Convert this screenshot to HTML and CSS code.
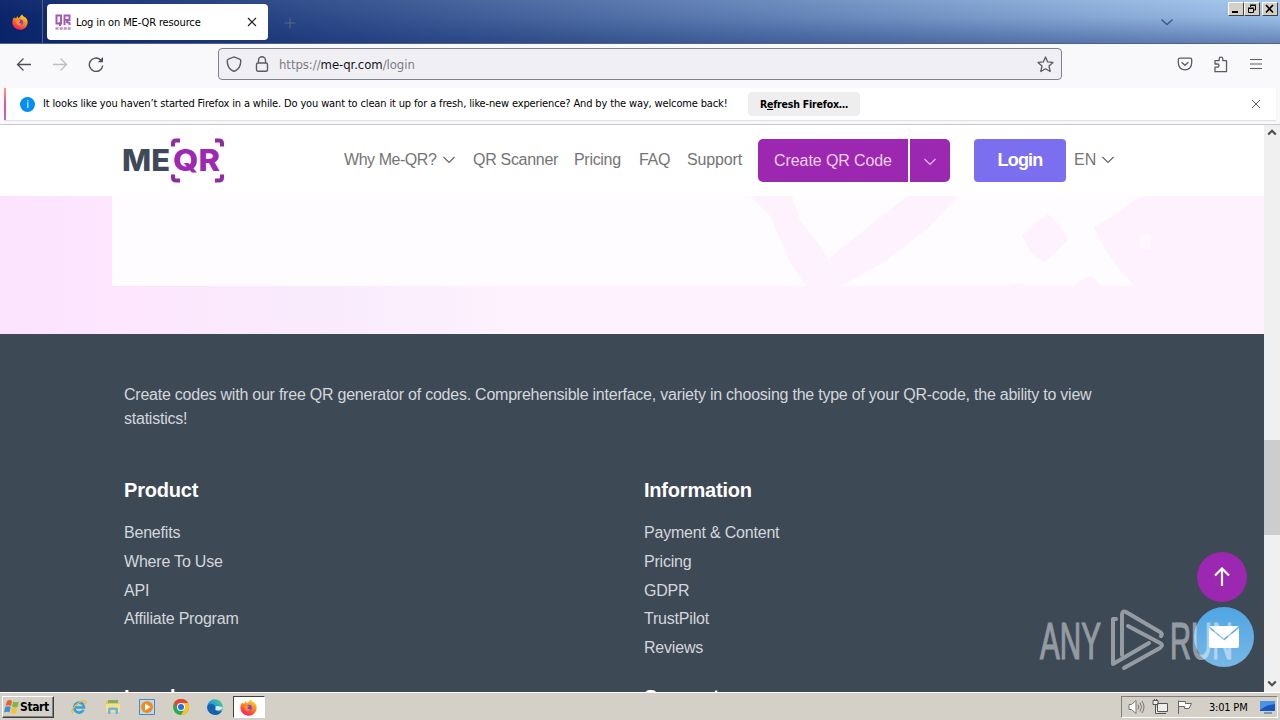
FILE: index.html
```html
<!DOCTYPE html>
<html lang="en">
<head>
    <meta charset="UTF-8">
    <meta name="viewport" content="width=device-width, initial-scale=1.0">
    <title>Log in on ME-QR resource</title>
    <link rel="stylesheet" href="styles.css">
</head>
<body>
    <svg width="0" height="0" class="defs">
        <defs>
            <linearGradient id="fox" x1="0.8" y1="0" x2="0.3" y2="1">
                <stop offset="0" stop-color="#ffe226"/>
                <stop offset="0.45" stop-color="#ff8a16"/>
                <stop offset="1" stop-color="#f5156c"/>
            </linearGradient>
            <linearGradient id="edge" x1="0" y1="1" x2="1" y2="0">
                <stop offset="0" stop-color="#0c59a4"/>
                <stop offset="0.5" stop-color="#1b9de2"/>
                <stop offset="1" stop-color="#5fd668"/>
            </linearGradient>
            <symbol id="firefox" viewBox="0 0 16 16">
                <path d="M5 2.200C6 3 6.300 3.600 6.600 4.200 8 3 8.700 1.800 10.200.3c.3 1.300 1.200 2 2.400 3.100l.2-.6C15 4.700 15.900 6.500 15.600 9c-.4 4-3.700 6.800-7.500 6.800S.6 12.800.4 8.800C.3 6.500 1 4.600 2.300 3.100l.5 1.300C3.500 4 4.300 3.900 4.700 4c-.1-.7 0-1.200.3-1.800z" fill="url(#fox)"/>
                <circle cx="8.300" cy="8.300" r="2.800" fill="#7542e5"/>
                <path d="M4.500 6.200c1.300-.7 2.700-.2 4.100.5L7 8.200c0 1.300 1.500 1.800 2.700 1-.4 1.700-1.800 2.300-3.200 1.900-1.700-.5-2.600-2.600-2-4.900z" fill="#ff9420"/>
            </symbol>
        </defs>
    </svg>

    <div class="desktop">
        <!-- Title bar -->
        <div class="titlebar">
            <div class="app-icon"><svg width="16" height="16"><use href="#firefox"/></svg></div>
            <div class="tab">
                <svg class="favicon" width="16" height="17" viewBox="0 0 16 17" fill="none" stroke="#a657b8">
                    <path d="M1.500 1.500h4.500v8H1.500zM5 8v4M9.500 11V1.500h5v4.500h-5M12 6v2l2.500 1v2" stroke-width="2"/>
                    <path d="M.5 14.500h3M4.700 14.500h3M8.700 14.500h3M12.700 14.500h3" stroke-width="2.500" opacity=".7"/>
                </svg>
                <span class="tab-title">Log in on ME-QR resource</span>
                <svg width="10" height="10" viewBox="0 0 10 10" stroke="#222" stroke-width="1.200"><path d="M1 1l8 8M9 1l-8 8"/></svg>
            </div>
            <svg class="new-tab" width="12" height="12" viewBox="0 0 12 12" stroke="#586980"><path d="M6 .5v11M.5 6h11"/></svg>
            <svg class="tabs-menu" width="12" height="8" viewBox="0 0 12 8" fill="none" stroke="#3c5980" stroke-width="1.400"><path d="M.5 1.500L6 6.500l5.500-5"/></svg>
            <div class="window-buttons">
                <span class="wbtn"><svg width="12" height="10" viewBox="0 0 12 10"><path d="M2 7h6v2H2z"/></svg></span>
                <span class="wbtn restore"><svg width="12" height="10" viewBox="0 0 12 10" fill="none" stroke="#000"><path d="M4.500 3V1.500h5v4.500H8M4 1h6M2.500 4.500h5v4h-5zM2 4h6"/></svg></span>
                <span class="wbtn"><svg width="12" height="10" viewBox="0 0 12 10" stroke="#000" stroke-width="1.700"><path d="M2 1l7 7.500M9 1L2 8.500"/></svg></span>
            </div>
        </div>

        <!-- Address bar -->
        <div class="toolbar">
            <svg width="16" height="16" viewBox="0 0 16 16" fill="none" stroke="#4f4f59" stroke-width="1.300"><path d="M15 8.500H1.500M7.500 2.500l-6 6 6 6"/></svg>
            <svg width="16" height="16" viewBox="0 0 16 16" fill="none" stroke="#bcbcc2" stroke-width="1.300"><path d="M1 8.500h13.500M8.500 2.500l6 6-6 6"/></svg>
            <svg width="16" height="16" viewBox="0 0 16 16" fill="none" stroke="#4f4f59" stroke-width="1.400"><path d="M14.700 9.500A6.700 6.700 0 1 1 12.500 3.700l1.500 1.500"/><path d="M15 1v5.200H9.800z" fill="#4f4f59" stroke="none"/></svg>
            <div class="urlbar">
                <svg width="16" height="16" viewBox="0 0 16 16" fill="none" stroke="#5b5b66" stroke-width="1.400"><path d="M8 .9l5.600 2.200c.8.300 1.200.8 1.200 1.600-.1 4.600-1.800 8.500-6 10.300q-.8.400-1.600 0C3 13.200 1.300 9.300 1.200 4.700c0-.8.400-1.300 1.200-1.600z"/></svg>
                <svg width="14" height="16" viewBox="0 0 14 16" fill="none" stroke="#5b5b66" stroke-width="1.400"><rect x="1.500" y="7" width="11" height="8.300" rx="1.500"/><path d="M3.500 7V4.200a3.500 3.500 0 0 1 7 0V7"/></svg>
                <span class="url">https://<b>me-qr.com</b>/login</span>
                <svg class="star" width="17" height="17" viewBox="0 0 17 17" fill="none" stroke="#5b5b66" stroke-width="1.300" stroke-linejoin="round"><path d="M8.500 1l2.200 4.900 5.300.5-4 3.600 1.200 5.500-4.700-2.800-4.700 2.800L5 10 1 6.400l5.300-.5z"/></svg>
            </div>
            <svg class="pocket" width="16" height="16" viewBox="0 0 16 16" fill="none" stroke="#5b5b66" stroke-width="1.300"><path d="M2.800 2.200h10.400c.8 0 1.500.6 1.500 1.400V7c0 4-3 6.900-6.700 6.900S1.300 11 1.300 7V3.600c0-.8.700-1.400 1.500-1.400z"/><path d="M4.600 6.200L8 9.300l3.400-3.100"/></svg>
            <svg class="addons" width="16" height="17" viewBox="0 0 16 17" fill="none" stroke="#5b5b66" stroke-width="1.300" stroke-linejoin="round"><path d="M2 15.700v-4.500h2.400a1.600 1.600 0 0 0 0-3.200H2V4.600h4.200V3a1.800 1.800 0 0 1 3.600 0v1.600h3.700v11.100z"/></svg>
            <svg class="menu" width="12" height="12" viewBox="0 0 12 12" stroke="#5b5b66" stroke-width="1.200"><path d="M0 1.500h12M0 6h12M0 10.500h12"/></svg>
        </div>

        <!-- Notification -->
        <div class="notice">
            <div class="notice-box">
                <span class="info">i</span>
                <span class="notice-text">It looks like you haven’t started Firefox in a while. Do you want to clean it up for a fresh, like-new experience? And by the way, welcome back!</span>
                <button class="refresh">R<u>e</u>fresh Firefox…</button>
                <svg class="notice-close" width="10" height="10" viewBox="0 0 10 10" stroke="#5b5b66"><path d="M1 1l8 8M9 1l-8 8"/></svg>
            </div>
        </div>

        <div class="viewport">
            <div class="page">
                <header class="site-header">
                    <svg class="logo" width="102" height="48" viewBox="0 0 102 48">
                        <g class="logo-text">
                            <text x="-1" y="35" textLength="48" lengthAdjust="spacingAndGlyphs" fill="#3f4a59">ME</text>
                            <text x="50" y="35" textLength="47" lengthAdjust="spacingAndGlyphs" fill="#9e28b4">QR</text>
                        </g>
                        <path d="M50 10.500V7.500q0-3 3-3h4M92 4.500h4q3 0 3 3v3M50 38.500v3q0 3 3 3h4M92 44.500h4q3 0 3-3v-3" fill="none" stroke="#8f2ba3" stroke-width="4"/>
                    </svg>
                    <nav class="nav">
                        <a class="nav-item why">Why Me-QR?
                            <svg width="12" height="8" viewBox="0 0 12 8" fill="none" stroke="#666" stroke-width="1.200"><path d="M.5 1l5.500 5.500L11.500 1"/></svg>
                        </a>
                        <a class="nav-item scanner">QR Scanner</a>
                        <a class="nav-item pricing">Pricing</a>
                        <a class="nav-item faq">FAQ</a>
                        <a class="nav-item support">Support</a>
                    </nav>
                    <div class="create">
                        <a class="create-main">Create QR Code</a>
                        <a class="create-more"><svg width="12" height="8" viewBox="0 0 12 8" fill="none" stroke="#e3bfea" stroke-width="1.200"><path d="M.5 1l5.500 5.500L11.500 1"/></svg></a>
                    </div>
                    <a class="login">Login</a>
                    <a class="lang">EN
                        <svg width="12" height="8" viewBox="0 0 12 8" fill="none" stroke="#666" stroke-width="1.200"><path d="M.5 1l5.500 5.500L11.500 1"/></svg>
                    </a>
                </header>

                <section class="hero">
                    <div class="hero-card">
                        <svg width="1152" height="90" viewBox="0 0 1152 90" fill="#fdf2fe">
                            <path d="M638 0h42l8 24 20 26 9 14 8-8 26-21 40-31 4-4h51l-29 31-48 37-40 22h-35l-15-22-21-48z"/>
                            <path d="M936 18l12 12 8 14-14 14-10 8-12-8-10-18 12-12z"/>
                            <path d="M1036 0h116v90h-129l-17-18-15-22-9-19 18-10 24-18z"/>
                            <path d="M899 90q8-6 15 0zM962 90q8-8 16-10 6 3 11 10z"/>
                            <path d="M1028 39h11v14h-11z" fill="#fef8fe"/>
                        </svg>
                    </div>
                </section>

                <footer class="footer">
                    <p class="about">Create codes with our free QR generator of codes. Comprehensible interface, variety in choosing the type of your QR-code, the ability to view<br>statistics!</p>
                    <div class="footer-columns">
                        <div class="footer-column">
                            <h3>Product</h3>
                            <ul>
                                <li>Benefits</li>
                                <li>Where To Use</li>
                                <li>API</li>
                                <li>Affiliate Program</li>
                            </ul>
                        </div>
                        <div class="footer-column">
                            <h3>Information</h3>
                            <ul>
                                <li>Payment &amp; Content</li>
                                <li>Pricing</li>
                                <li>GDPR</li>
                                <li>TrustPilot</li>
                                <li>Reviews</li>
                            </ul>
                        </div>
                        <div class="footer-column"><h3>Legal</h3></div>
                        <div class="footer-column"><h3>Support</h3></div>
                    </div>
                </footer>

                <div class="to-top"><svg width="16" height="20" viewBox="0 0 16 20" fill="none" stroke="#fff" stroke-width="2.200"><path d="M8 19V2M1 8.500l7-7 7 7"/></svg></div>
                <div class="mail"><svg width="30" height="22" viewBox="0 0 30 22"><rect width="30" height="22" rx="2" fill="#fff"/><path d="M0 1l15 12.500L30 1" fill="none" stroke="#58a7de" stroke-width="1.500"/></svg></div>
                <svg class="watermark" width="200" height="64" viewBox="0 0 200 64">
                    <text x="2" y="51" textLength="61" lengthAdjust="spacingAndGlyphs">ANY</text>
                    <text x="132" y="51" textLength="63" lengthAdjust="spacingAndGlyphs">RUN</text>
                    <g fill="none" stroke="#fff" stroke-width="4" stroke-linejoin="round" stroke-linecap="round">
                        <path d="M84 47V7q0-5 4-3l34 20q3 2 1 4"/>
                        <path d="M78 11h-3v45l36-21M90 18l32 17q4 2 0 5L86 60"/>
                    </g>
                </svg>
            </div>
            <div class="scrollbar">
                <svg width="10" height="7" viewBox="0 0 10 7" fill="none" stroke="#505050" stroke-width="2.200"><path d="M1.200 5.500L5 1.700l3.800 3.800"/></svg>
                <div class="thumb"></div>
                <svg class="down" width="10" height="7" viewBox="0 0 10 7" fill="none" stroke="#505050" stroke-width="2.200"><path d="M1.200 1.500L5 5.300l3.800-3.800"/></svg>
            </div>
        </div>

        <!-- Taskbar -->
        <div class="taskbar">
            <div class="start">
                <svg width="16" height="16" viewBox="0 0 16 16">
                    <path d="M3 2q3-2 5 0L7 7Q4.500 5.500 1.500 7z" fill="#e8632c"/>
                    <path d="M9 2.500q3 1.500 6 0L13.500 8q-3 1-5.500-.5z" fill="#7db940"/>
                    <path d="M1.200 8q3-1.500 5.500 0l-1.300 5.500q-2.500-1.500-5.400 0z" fill="#3f8fd2"/>
                    <path d="M7.800 8.500q2.500 1.500 5.500.5L12 14q-3 1.200-5.500-.3z" fill="#f6c22d"/>
                </svg>
                Start
            </div>
            <div class="quick-launch">
                <svg width="16" height="16" viewBox="0 0 16 16" fill="none"><path d="M12.500 11a5 5 0 1 1 .6-2.500H4" stroke="#35a0dc" stroke-width="2.600"/><path d="M2 14Q-1 13 4 7q6-6 10-5 2 .8-.7 4" stroke="#e9b83b" stroke-width="1.200"/></svg>
                <svg width="16" height="16" viewBox="0 0 16 16"><path d="M1 2h5l1 1h7v10H1z" fill="#e6c559"/><path d="M3 1h10v3H3z" fill="#7fae68"/><path d="M1 5h14v8H1z" fill="#f5e08c"/><path d="M3 15v-5q0-1.500 1.500-1.500h7q1.500 0 1.500 1.500v5h-2.500v-4h-5v4z" fill="#6fb5dd"/></svg>
                <svg width="16" height="16" viewBox="0 0 16 16"><path d="M.5.5h15v15H.5z" fill="#b9dcf3" stroke="#4c87b8"/><circle cx="8" cy="8" r="6" fill="#f18a1c"/><path d="M6 4.500v7L11.500 8z" fill="#fff"/></svg>
                <svg width="16" height="16" viewBox="0 0 16 16"><circle cx="8" cy="8" r="8" fill="#2da94f"/><path d="M14.930 4H8v4l3.460 2L8 16A8 8 0 0 0 14.930 4z" fill="#fcc31e"/><path d="M1.070 4l3.470 6L8 4h6.930A8 8 0 0 0 1.070 4z" fill="#ea4335"/><circle cx="8" cy="8" r="4" fill="#fff"/><circle cx="8" cy="8" r="3" fill="#1a73e8"/></svg>
                <svg width="16" height="16" viewBox="0 0 16 16"><circle cx="8" cy="8" r="7.800" fill="url(#edge)"/><path d="M.2 8C1 4 7 4 8.500 7.500 9.500 10 7 11 10 12q3 .8 5 0-3 4.500-8 3.800Q.2 14 .2 8z" fill="#1362ad"/><path d="M8.300 7.500q1 2-.2 3 2 1.500 4.500.8 2.700-.8 3.200-3L11 7z" fill="#d6efe5"/></svg>
            </div>
            <div class="task-active"><svg width="17" height="17"><use href="#firefox"/></svg></div>
            <div class="tray">
                <svg width="17" height="16" viewBox="0 0 17 16" fill="#fff" stroke="#777"><path d="M1 5.500h2.500L8 1.500v13l-4.500-4H1z"/><path d="M10 5.500q1.500 2.500 0 5M12 3.500q3 4.500 0 9M14 2q4 6 0 12" fill="none"/></svg>
                <svg width="17" height="16" viewBox="0 0 17 16" fill="#eee" stroke="#555"><path d="M5.500 4.500h10v8h-10zM7 14.500h7M1 1.500h5v4H1zM2.500 0v2M4.500 0v2M3.500 5.500v9H7"/></svg>
                <svg width="17" height="16" viewBox="0 0 17 16" fill="#fff" stroke="#666"><path d="M2.500 15V1.500M2.500 2.500h7v2h6l-2.500 5H8.500v-2h-6"/></svg>
                <span class="clock">3:01 PM</span>
                <svg class="show-desktop" width="16" height="13" viewBox="0 0 16 13"><path d="M0 0h15v10H0z" fill="#1856bd"/><path d="M0 0h15v3Q6 4 0 9z" fill="#4b91e6"/><path d="M4 11h8v2H4z" fill="#7f93ac"/></svg>
            </div>
        </div>
    </div>
</body>
</html>
```
FILE: styles.css
```css
* {
    box-sizing: border-box;
}
body {
    margin: 0;
    overflow: hidden;
    font-family: "DejaVu Sans Condensed", "DejaVu Sans", sans-serif;
    font-size: 11px;
    color: #000;
}
svg {
    display: block;
    flex: none;
}
.defs {
    position: absolute;
}
.desktop {
    width: 1280px;
    height: 720px;
    display: flex;
    flex-direction: column;
}

/* Title bar */
.titlebar {
    height: 44px;
    display: flex;
    align-items: flex-start;
    border-bottom: 1px solid #536187;
    background: linear-gradient(rgba(255, 255, 255, 0.03), rgba(10, 36, 106, 0.08) 40%, rgba(10, 36, 106, 0.42)), linear-gradient(90deg, #0a246a, #a6caf0);
}
.app-icon {
    width: 43px;
    height: 43px;
    padding: 14px 0 0 12px;
    border-right: 1px solid #4d6090;
}
.tab {
    width: 221px;
    height: 36px;
    margin: 4px 0 0 4px;
    padding: 0 11px 0 8px;
    display: flex;
    align-items: center;
    background: #fff;
    border-radius: 4px;
}
.tab-title {
    flex: 1;
    margin-left: 5px;
    padding-top: 1px;
    white-space: nowrap;
    letter-spacing: -0.130px;
}
.new-tab {
    margin: 17px 0 0 16px;
}
.tabs-menu {
    margin: 18px 0 0 auto;
}
.window-buttons {
    display: flex;
    margin: 2px 2px 0 55px;
}
.wbtn {
    width: 16px;
    height: 14px;
    padding: 1px;
    background: #d4d0c8;
    border: 1px solid;
    border-color: #fff #404040 #404040 #fff;
}
.restore {
    margin-right: 2px;
}

/* Address bar */
.toolbar {
    height: 44px;
    display: flex;
    align-items: center;
    padding: 0 18px 4px 16px;
    background: #f9f9fb;
    gap: 20px;
}
.urlbar {
    width: 844px;
    height: 32px;
    margin-left: 94px;
    padding: 0 7px;
    display: flex;
    align-items: center;
    gap: 13px;
    background: #f0f0f4;
    border: 1px solid #80808a;
    border-radius: 4px;
}
.url {
    font-size: 13px;
    color: #7c7c83;
    letter-spacing: -0.050px;
    margin-left: -3px;
}
.url b {
    font-weight: normal;
    color: #15141a;
}
.star {
    margin-left: auto;
}
.pocket {
    margin-left: auto;
}
.addons {
    margin-right: 1px;
}

/* Notification */
.notice {
    height: 37px;
    background: #f9f9fb;
    border-bottom: 1px solid #c8c8cc;
    padding: 0 4px;
}
.notice-box {
    height: 32px;
    padding: 0 15px 0 14px;
    display: flex;
    align-items: center;
    background: #fff;
    border-left: 2px solid;
    border-image: linear-gradient(#ff9f77, #e0529c, #a86bdc) 1;
    box-shadow: 0 1px 1px #e2e2e6;
}
.info {
    width: 15px;
    height: 15px;
    border-radius: 50%;
    background: #0090ed;
    color: #fff;
    text-align: center;
    line-height: 15px;
}
.notice-text {
    width: 684px;
    margin-left: 8px;
    padding-bottom: 2px;
    white-space: nowrap;
    letter-spacing: -0.145px;
}
.refresh {
    width: 112px;
    height: 24px;
    margin-left: 21px;
    padding: 0;
    border: 0;
    border-radius: 4px;
    background: #eeeeef;
    font: bold 10.500px "DejaVu Sans Condensed", "DejaVu Sans", sans-serif;
    letter-spacing: -0.200px;
    white-space: nowrap;
}
.notice-close {
    margin-left: auto;
}

/* Page */
.viewport {
    height: 567px;
    display: flex;
}
.page {
    position: relative;
    width: 1264px;
    overflow: hidden;
    background: #fff;
    font-family: "Liberation Sans", Arial, sans-serif;
    font-size: 16px;
}
.site-header {
    height: 71px;
    padding: 11px 0 0 123px;
    display: flex;
    color: #757575;
}
.logo {
    overflow: visible;
}
.logo-text {
    font: 800 29.500px "Inter", sans-serif;
}
.nav {
    display: flex;
    gap: 16px;
    margin: 14px 0 0 119px;
}
.nav-item {
    height: 20px;
    line-height: 20px;
    white-space: nowrap;
    letter-spacing: -0.300px;
}
.why,
.lang {
    display: flex;
    align-items: center;
    justify-content: space-between;
}
.why {
    width: 113px;
    padding-right: 2px;
    letter-spacing: -0.450px;
}
.scanner {
    width: 85px;
}
.pricing {
    width: 49px;
}
.faq {
    width: 32px;
}
.support {
    width: 55px;
    letter-spacing: -0.150px;
}
.create {
    display: flex;
    gap: 2px;
    height: 43px;
    margin: 3px 0 0 16px;
}
.create-main,
.create-more {
    display: flex;
    align-items: center;
    justify-content: center;
    background: #9c27b0;
    color: #ecd2f0;
}
.create-main {
    width: 150px;
    letter-spacing: -0.100px;
    border-radius: 5px 0 0 5px;
}
.create-more {
    width: 40px;
    padding-top: 3px;
    border-radius: 0 5px 5px 0;
}
.login {
    width: 92px;
    height: 43px;
    margin: 3px 0 0 24px;
    line-height: 43px;
    text-align: center;
    font-size: 18px;
    font-weight: bold;
    letter-spacing: -0.800px;
    color: #fff;
    background: #7b6ff0;
    border-radius: 4px;
}
.lang {
    width: 40px;
    height: 20px;
    margin: 14px 0 0 8px;
}
.hero {
    height: 138px;
    padding-left: 112px;
    background: linear-gradient(90deg, #fbe3fe, #fde6fe 120px, #f9ebfc 330px, #fdf2fe 520px);
}
.hero-card {
    height: 90px;
    background: #fefcfe;
}

/* Footer */
.footer {
    height: 358px;
    padding: 49px 124px 0;
    background: #3e4956;
    color: #d3d7db;
}
.about {
    margin: 0;
    line-height: 24px;
    white-space: nowrap;
    letter-spacing: -0.235px;
}
.footer-columns {
    display: grid;
    grid-template-columns: 520px 1fr;
    padding-top: 47px;
}
.footer-column {
    min-height: 207px;
}
.footer h3 {
    margin: 0 0 19px;
    font-size: 20px;
    line-height: 24px;
    letter-spacing: -0.200px;
    color: #fff;
}
.footer ul {
    margin: 0;
    padding: 0;
    list-style: none;
}
.footer li {
    line-height: 24px;
    margin-bottom: 4.800px;
    letter-spacing: -0.200px;
}
.footer li:last-child {
    margin-bottom: 0;
}

/* Floating buttons */
.to-top,
.mail {
    position: absolute;
    display: flex;
    align-items: center;
    justify-content: center;
    border-radius: 50%;
}
.to-top {
    left: 1197px;
    top: 427px;
    width: 50px;
    height: 50px;
    background: #9c27b0;
}
.mail {
    left: 1194px;
    top: 482px;
    width: 60px;
    height: 60px;
    background: linear-gradient(#4fa5e2, #78b8e6);
}
.watermark {
    position: absolute;
    left: 1038px;
    top: 483px;
    opacity: 0.45;
}
.watermark text {
    font: 52px "Liberation Sans", sans-serif;
    fill: #fff;
    stroke: #fff;
    stroke-width: 1.200px;
}

/* Scrollbar */
.scrollbar {
    width: 16px;
    padding: 4px 0 5px;
    display: flex;
    flex-direction: column;
    align-items: center;
    background: #f0f0f0;
}
.thumb {
    width: 16px;
    height: 95px;
    margin-top: 304px;
    background: #cdcdcd;
}
.down {
    margin-top: auto;
}

/* Taskbar */
.taskbar {
    height: 28px;
    padding: 2px 2px 0;
    display: flex;
    background: #d4d0c8;
    border-top: 1px solid #fff;
}
.start {
    width: 52px;
    height: 22px;
    margin-top: 1px;
    padding-left: 1px;
    display: flex;
    align-items: center;
    font-size: 12px;
    font-weight: bold;
    letter-spacing: -0.400px;
    border: 1px solid;
    border-color: #fff #404040 #404040 #fff;
    box-shadow: inset -1px -1px #808080;
}
.quick-launch {
    display: flex;
    gap: 18px;
    margin: 4px 0 0 17px;
}
.task-active {
    width: 32px;
    height: 22px;
    margin: 1px 0 0 10px;
    padding: 2px 0 0 6px;
    background: #fff;
    border: 1px solid;
    border-color: #404040 #fff #fff #404040;
}
.tray {
    width: 157px;
    height: 22px;
    margin: 1px 0 0 auto;
    padding: 0 1px 0 6px;
    display: flex;
    align-items: center;
    gap: 7px;
    border: 1px solid;
    border-color: #808080 #fff #fff #808080;
}
.clock {
    width: 42px;
    margin-left: 9px;
    white-space: nowrap;
    letter-spacing: -0.200px;
}
.show-desktop {
    margin-left: auto;
}
```
